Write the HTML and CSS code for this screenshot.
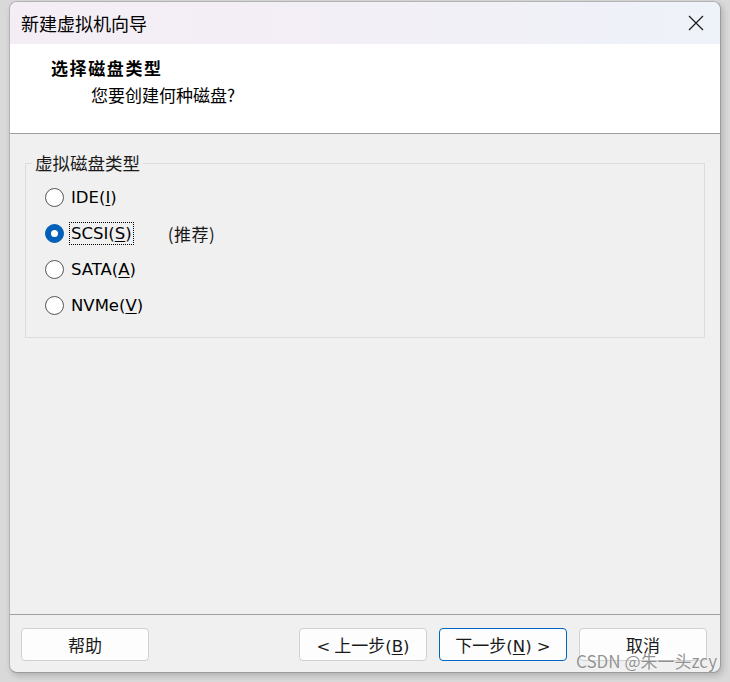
FILE: index.html
```html
<!DOCTYPE html>
<html lang="zh-CN">
<head>
<meta charset="utf-8">
<title>新建虚拟机向导</title>
<link rel="stylesheet" href="styles.css">
</head>
<body>
<div class="window">
  <div class="titlebar">
    <span class="title">新建虚拟机向导</span>
    <svg class="close" width="16" height="16" viewBox="0 0 16 16" aria-hidden="true">
      <path d="M1 1 L15 15 M15 1 L1 15" stroke="#1a1a1a" stroke-width="1.2" fill="none"/>
    </svg>
  </div>
  <div class="header">
    <div class="h-title">选择磁盘类型</div>
    <div class="h-sub">您要创建何种磁盘?</div>
  </div>
  <div class="body">
    <fieldset class="group">
      <legend class="legend">虚拟磁盘类型</legend>
      <div class="row"><span class="radio"></span><span class="label">IDE(<u>I</u>)</span></div>
      <div class="row"><span class="radio checked"></span><span class="label focus">SCSI(<u>S</u>)</span><span class="note">(推荐)</span></div>
      <div class="row"><span class="radio"></span><span class="label">SATA(<u>A</u>)</span></div>
      <div class="row"><span class="radio"></span><span class="label">NVMe(<u>V</u>)</span></div>
    </fieldset>
  </div>
  <div class="footer">
    <button class="btn">帮助</button>
    <div class="spacer"></div>
    <button class="btn"><span class="lat">&lt;</span> 上一步<span class="lat">(<u>B</u>)</span></button>
    <button class="btn default">下一步<span class="lat">(<u>N</u>) &gt;</span></button>
    <button class="btn">取消</button>
  </div>
</div>
<div class="watermark">CSDN @朱一头zcy</div>
</body>
</html>
```
FILE: styles.css
```css
* { box-sizing: border-box; }
html, body { margin: 0; padding: 0; }
body {
  width: 730px;
  height: 682px;
  background: #d9d9d9;
  font-family: "Noto Sans CJK SC", sans-serif;
  color: #000;
  position: relative;
  overflow: hidden;
}
.window {
  margin: 1px 0 0 9px;
  width: 712px;
  height: 672px;
  border: 1px solid #b3b3b3;
  border-right-color: #9c9c9c;
  border-bottom-color: #9a9a9a;
  border-radius: 8px;
  overflow: hidden;
  background: #f0f0f0;
  display: flex;
  flex-direction: column;
  box-shadow: 2px 3px 6px rgba(0,0,0,0.18);
}
.titlebar {
  height: 42px;
  flex: none;
  display: flex;
  align-items: center;
  justify-content: space-between;
  padding: 0 16px 0 11px;
  background: linear-gradient(90deg, #f4edf5 0%, #f3eff6 50%, #eef2f9 100%);
}
.title {
  font-size: 18px;
  line-height: 24px;
  margin-top: -1px;
}
.close { display: block; margin-top: -1px; }
.header {
  height: 90px;
  flex: none;
  background: #fff;
  border-bottom: 1px solid #a0a0a0;
  padding: 12px 0 0 41px;
}
.h-title {
  font-size: 17px;
  font-weight: bold;
  line-height: 24px;
  letter-spacing: 1.6px;
}
.h-sub {
  font-size: 17px;
  line-height: 30px;
  padding-left: 40px;
}
.body {
  flex: 1;
  padding-top: 19px;
}
.group {
  margin: 0 15px;
  border: 1px solid #dcdcdc;
  padding: 6px 0 14px 6px;
  min-width: 0;
}
.legend {
  padding: 0 3px;
  font-size: 17.5px;
  line-height: 20px;
  color: #1a1a1a;
}
.row {
  height: 36px;
  display: flex;
  align-items: center;
  padding-left: 13px;
}
.radio {
  width: 19px;
  height: 19px;
  border-radius: 50%;
  border: 1px solid #555;
  background: #fff;
  flex: none;
  margin-right: 5px;
  position: relative;
}
.radio.checked {
  background: #005fb8;
  border-color: #005fb8;
}
.radio.checked::after {
  content: "";
  position: absolute;
  left: 5px;
  top: 5px;
  width: 7px;
  height: 7px;
  border-radius: 50%;
  background: #fff;
}
.label {
  font-family: "DejaVu Sans", sans-serif;
  font-size: 16.5px;
  line-height: 19px;
  padding: 1px 1px;
  border: 1px dotted transparent;
}
.label.focus { border-color: #000; }
.label u { text-underline-offset: 2px; }
.note {
  font-size: 17px;
  margin-left: 34px;
  color: #1a1a1a;
  letter-spacing: 0.5px;
}
.footer {
  height: 58px;
  flex: none;
  border-top: 1px solid #a0a0a0;
  display: flex;
  align-items: flex-start;
  padding: 13px 13px 0 11px;
  gap: 12px;
}
.spacer { flex: 1; }
.btn {
  width: 128px;
  height: 33px;
  background: #fdfdfd;
  border: 1px solid #d0d0d0;
  border-radius: 4px;
  font-family: "Noto Sans CJK SC", sans-serif;
  font-size: 17px;
  color: #1a1a1a;
  padding: 0;
  line-height: 31px;
}
.btn.default { border-color: #0067c0; }
.btn .lat {
  font-family: "DejaVu Sans", sans-serif;
  font-size: 16.5px;
}
.btn u { text-underline-offset: 2px; }
.watermark {
  position: absolute;
  right: 13px;
  top: 650px;
  font-family: "Noto Sans CJK SC", sans-serif;
  font-size: 17px;
  line-height: 22px;
  color: rgba(110,110,110,0.75);
  text-shadow: 0 0 1px #fff;
  white-space: nowrap;
}
```
